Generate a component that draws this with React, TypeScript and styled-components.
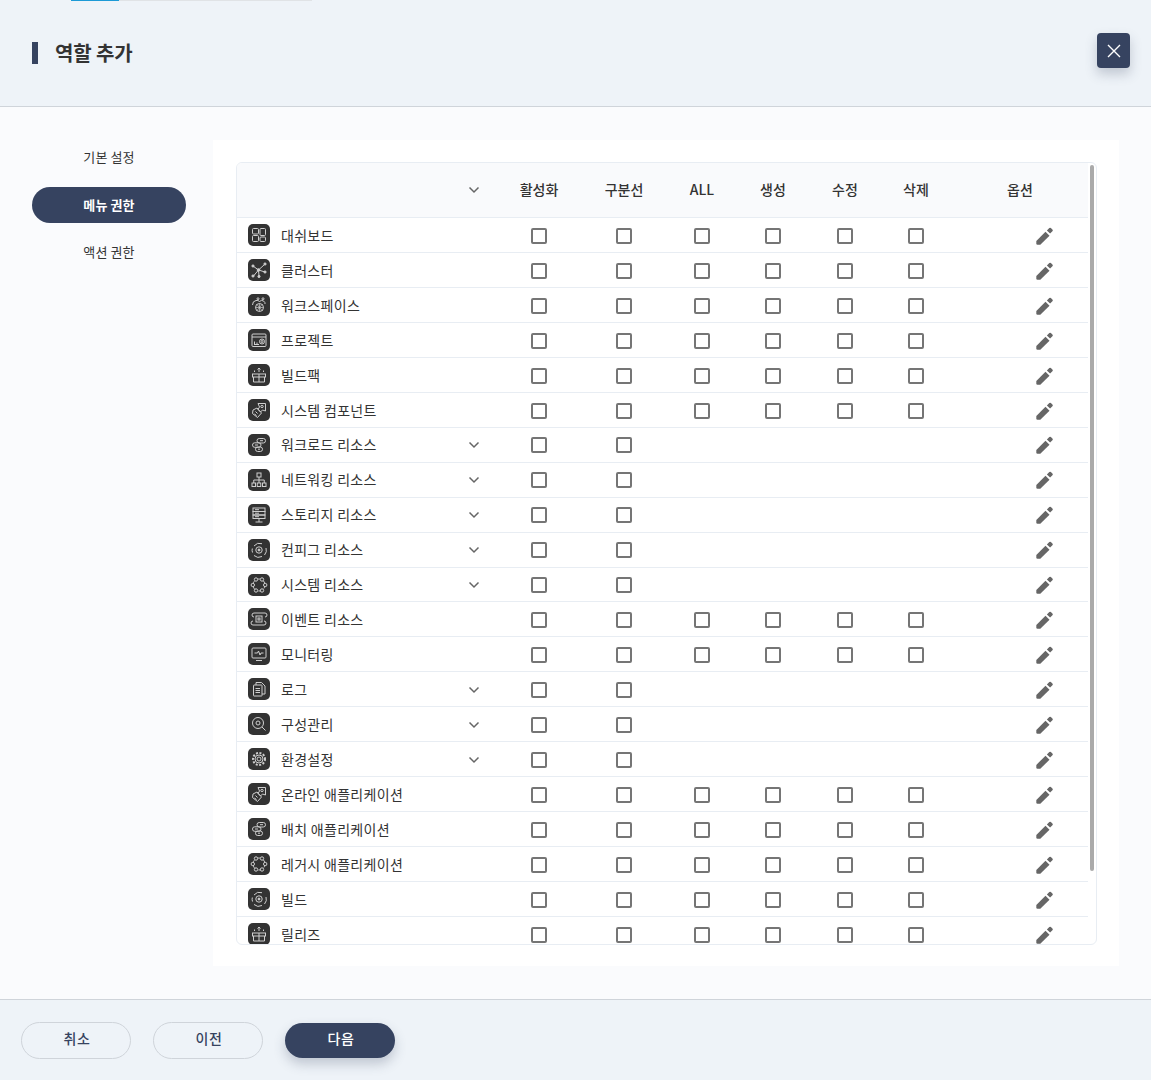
import React from 'react'
import styled, { createGlobalStyle } from 'styled-components'

const GlobalStyle = createGlobalStyle`
  html, body {
    margin: 0;
    padding: 0;
    height: 100%;
    background: #fafbfd;
    font-family: 'Noto Sans CJK KR', 'Noto Sans', sans-serif;
    color: #333;
  }
  * { box-sizing: border-box; }
`

const COLUMNS = '260px 84px 86px 70px 72px 72px 70px 138px'

const Page = styled.div`
  width: 1151px;
  height: 1080px;
  display: flex;
  flex-direction: column;
  overflow: hidden;
`

const Header = styled.header`
  height: 107px;
  flex: none;
  background: #eef3f8;
  border-bottom: 1px solid #cfd4da;
`

const Progress = styled.div`
  width: 241px;
  height: 1px;
  margin-left: 71px;
  background: #e0e3e6;
`

const ProgressFill = styled.div`
  height: 100%;
  background: #1c9ad6;
`

const HeaderRow = styled.div`
  display: flex;
  align-items: flex-start;
  justify-content: space-between;
  padding: 32px 21px 0 32px;
`

const Title = styled.h1`
  margin: 9px 0 0;
  display: flex;
  align-items: center;
  gap: 17px;
  font-size: 20px;
  font-weight: 700;
  line-height: 22px;
  letter-spacing: -0.1px;
  color: #333;

  &::before {
    content: '';
    width: 6px;
    height: 22px;
    background: #364360;
  }
`

const CloseButton = styled.button`
  width: 33px;
  height: 35px;
  padding: 0;
  border: 0;
  border-radius: 4px;
  background: #364360;
  box-shadow: 0 6px 12px rgba(54, 67, 96, 0.25);
  display: flex;
  align-items: center;
  justify-content: center;
`

const Body = styled.main`
  flex: 1;
  min-height: 0;
  display: flex;
  padding: 33px 32px;
  background: #fafbfd;
`

const Side = styled.nav`
  width: 181px;
  flex: none;
  margin-top: -0.25px;
  display: flex;
  flex-direction: column;
  gap: 11.5px;
`

const SideItem = styled.div<{ $active?: boolean }>`
  width: 154px;
  height: 36px;
  padding-bottom: 2px;
  border-radius: 18px;
  display: flex;
  align-items: center;
  justify-content: center;
  font-size: 13px;
  letter-spacing: 0.1px;
  font-weight: ${p => (p.$active ? 700 : 400)};
  color: ${p => (p.$active ? '#fff' : '#333')};
  background: ${p => (p.$active ? '#364360' : 'transparent')};
`

const Panel = styled.section`
  width: 906px;
  height: 826px;
  flex: none;
  padding: 22px 22px 21px 23px;
  background: #fff;
`

const TableBox = styled.div`
  position: relative;
  height: 100%;
  padding-right: 8px;
  border: 1px solid #e8edf3;
  border-radius: 6px;
  overflow: hidden;
`

const ScrollThumb = styled.div`
  position: absolute;
  top: 2px;
  right: 2px;
  width: 4px;
  height: 706px;
  border-radius: 2px;
  background: #aaa;
`

const HeadRow = styled.div`
  display: grid;
  grid-template-columns: ${COLUMNS};
  height: 55px;
  align-items: center;
  background: #f9fafc;
  border-bottom: 1px solid #e8edf3;
`

const HeadCell = styled.div`
  padding-bottom: 2px;
  text-align: center;
  font-size: 14px;
  font-weight: 500;
  color: #333;
`

const Row = styled.div`
  display: grid;
  grid-template-columns: ${COLUMNS};
  height: 34.96px;
  align-items: center;
  border-bottom: 1px solid #e8edf3;
`

const NameCell = styled.div`
  display: flex;
  align-items: center;
  gap: 11px;
  padding-left: 11px;
  padding-right: 17px;
  font-size: 14px;
  letter-spacing: 0.3px;
  color: #333;
`

const HeadChevron = styled.div`
  display: flex;
  justify-content: flex-end;
  padding-right: 17px;
`

const Name = styled.span`
  flex: 1;
  padding-bottom: 0.42px;
  white-space: nowrap;
`

const ChevronIcon = styled.svg`
  display: block;
  flex: none;
  fill: none;
  stroke: #666;
  stroke-width: 1.5;
`

const RowChevron = styled(ChevronIcon)`
  margin-top: 1.56px;
`

const IconTile = styled.span`
  width: 22px;
  height: 22px;
  flex: none;
  border-radius: 5px;
  background: #333;
  display: block;

  svg {
    display: block;
    fill: none;
    stroke: #cfcfcf;
    stroke-width: 1;
  }
`

const Center = styled.div`
  display: flex;
  justify-content: center;
  padding-top: 1.56px;
`

const Check = styled.input.attrs({ type: 'checkbox' })`
  appearance: none;
  width: 16px;
  height: 16px;
  margin: 0;
  border: 2px solid #757575;
  border-radius: 2px;
  background: #fff;
`

const EditCell = styled.div`
  display: flex;
  justify-content: center;
  padding-left: 49px;
  padding-top: 1.56px;
`

const Footer = styled.footer`
  height: 81px;
  flex: none;
  display: flex;
  align-items: center;
  gap: 22px;
  padding: 0 0 0 21px;
  background: #eef3f8;
  border-top: 1px solid #cfd4da;
`

const FooterButton = styled.button<{ $primary?: boolean }>`
  width: 110px;
  height: ${p => (p.$primary ? 35 : 37)}px;
  padding: 0 0 4px 2px;
  border-radius: 19px;
  border: ${p => (p.$primary ? '0' : '1px solid #cfd4da')};
  background: ${p => (p.$primary ? '#364360' : 'transparent')};
  color: ${p => (p.$primary ? '#fff' : '#364360')};
  box-shadow: ${p => (p.$primary ? '0 6px 12px rgba(54, 67, 96, 0.25)' : 'none')};
  font-family: inherit;
  font-size: 14px;
  letter-spacing: 0.5px;
  font-weight: 500;
`

const Close = () => (
  <svg width="14" height="14" viewBox="0 0 14 14" fill="none" stroke="#fff" strokeWidth="1.4">
    <path d="M1 1l12 12M13 1 1 13" />
  </svg>
)

const Pencil = () => (
  <svg width="17" height="18" viewBox="0 0 17 18" fill="#666">
    <path d="M.3 13.900 9.500 4.700l4 4-9.200 9.100H1.500Q.3 17.800.3 16.600z" />
    <path d="M10.900 3.400l2.400-2.300q.8-.8 1.600 0l1.500 1.500q.8.800 0 1.600l-2.300 2.400z" />
  </svg>
)

const glyphs: Record<string, React.ReactNode> = {
  dashboard: (
    <>
      <rect x="4.500" y="4.500" width="6" height="5.500" rx="1" />
      <rect x="4.500" y="11.500" width="6" height="6" rx="1" />
      <rect x="12" y="4.500" width="5.500" height="7" rx="1" />
      <rect x="12" y="13" width="5.500" height="4.500" rx="1" />
    </>
  ),
  cluster: (
    <>
      <path d="M10.500 11 16.500 5.500M10.500 11 5 7M10.500 11 5.500 17M10.500 11 11 17M10.500 11 17 13" />
      <circle cx="10.500" cy="11" r="1.300" fill="#cfcfcf" />
      <circle cx="17" cy="5" r="1.100" fill="#cfcfcf" />
      <circle cx="5" cy="7" r="1.100" fill="#cfcfcf" />
      <circle cx="5" cy="17" r="1.100" fill="#cfcfcf" />
      <circle cx="11" cy="17.500" r="1.100" fill="#cfcfcf" />
      <circle cx="17" cy="13" r="1.100" fill="#cfcfcf" />
    </>
  ),
  workspace: (
    <>
      <circle cx="11.500" cy="13.500" r="4" />
      <path d="M7.500 13.500h8M11.500 9.500v8M9 10.500l5 6M14 10.500l-5 6" strokeWidth="0.7" />
      <path d="M4.500 11q0-4 3.500-4.500 2-.5 3.500 1 2-2 4-.5t1.500 3" />
      <circle cx="10" cy="4.800" r="1" />
      <circle cx="15" cy="4.800" r="1" />
    </>
  ),
  project: (
    <>
      <rect x="4" y="5" width="14" height="12.500" rx="1" />
      <path d="M4 8h14M6.500 15.500v-3M9 15.500v-2M11 15.500H6" />
      <circle cx="14" cy="12.500" r="2.500" />
      <circle cx="14" cy="12.500" r="1" />
    </>
  ),
  pack: (
    <>
      <rect x="4.500" y="10" width="13" height="3" />
      <path d="M5.500 13v5h11v-5M11 10v8M11 8V4M9.500 5.500 11 4l1.500 1.500M6.500 8V6.500M15.500 8V6.500" />
    </>
  ),
  component: (
    <>
      <path d="M10 4.500h7.500V12l-3-1-2 2-2.500-2.500 1.500-2.500z" />
      <path d="M5 11l4-2 4.500 5-4 4.500-5-4z" />
      <circle cx="14" cy="7.500" r="1.200" />
      <path d="M7.500 12.500l2 2M6.500 15l2 1.500" />
    </>
  ),
  workload: (
    <>
      <rect x="9" y="4.500" width="8.500" height="4.500" rx="2.200" />
      <rect x="4.500" y="8.800" width="8.500" height="4.500" rx="2.200" />
      <rect x="7.500" y="13" width="7" height="4.500" rx="2.200" />
      <path d="M12 6.700h3M7 11h3M10 15.200h2" />
    </>
  ),
  network: (
    <>
      <rect x="9" y="4" width="4" height="4" />
      <rect x="4" y="14" width="3.500" height="3.500" />
      <rect x="9.250" y="14" width="3.500" height="3.500" />
      <rect x="14.500" y="14" width="3.500" height="3.500" />
      <path d="M11 8v6M5.750 14v-3h10.500v3" />
    </>
  ),
  storage: (
    <>
      <rect x="5" y="4" width="12" height="3.500" />
      <rect x="5" y="7.500" width="12" height="3.500" />
      <rect x="5" y="11" width="12" height="3.500" />
      <path d="M11 14.500V18M7.500 18h7M7 5.700h4M7 9.200h4M7 12.700h4" />
    </>
  ),
  config: (
    <>
      <path d="M6 7A7 7 0 0 1 14 4.700M18 9a7 7 0 0 1-1.500 7M14 17.500a7 7 0 0 1-8-1M4.500 13.500a7 7 0 0 1-.200-4" />
      <circle cx="11" cy="11" r="3.200" />
      <circle cx="11" cy="11" r="1" fill="#cfcfcf" />
    </>
  ),
  system: (
    <>
      <circle cx="11" cy="11" r="6" strokeDasharray="2.600 3.680" strokeDashoffset="-1" />
      <circle cx="8" cy="5.500" r="1.700" />
      <circle cx="14" cy="5.500" r="1.700" />
      <circle cx="4.800" cy="11" r="1.700" />
      <circle cx="17.200" cy="11" r="1.700" />
      <circle cx="8" cy="16.500" r="1.700" />
      <circle cx="14" cy="16.500" r="1.700" />
    </>
  ),
  event: (
    <>
      <path d="M6 5h11a2 2 0 0 1 0 4M5 17h11a2 2 0 0 0 0-4M6 5a2 2 0 0 0 0 4M5 13a2 2 0 0 0 0 4" />
      <rect x="8" y="8" width="6" height="6" />
      <rect x="10" y="10" width="2" height="2" />
    </>
  ),
  monitor: (
    <>
      <rect x="4" y="5" width="14" height="10" rx="1" />
      <path d="M6.500 10h3l1-2 1.500 4 1-2h2.500M8 17.500h6" />
    </>
  ),
  log: (
    <>
      <path d="M8 7V4.500h5.500L17 8v8h-3" />
      <rect x="5.500" y="7" width="8.500" height="11" rx="0.500" />
      <path d="M7.500 10.500h4.500M7.500 12.500h4.500M7.500 14.500h4.500" />
    </>
  ),
  search: (
    <>
      <circle cx="10" cy="10" r="5.500" />
      <circle cx="10" cy="10" r="2" />
      <path d="M14 14l3.500 3.500" />
    </>
  ),
  settings: (
    <>
      <circle cx="11" cy="11" r="2" />
      <circle cx="11" cy="11" r="4" />
      <circle cx="11" cy="11" r="6" strokeDasharray="2 1.500" strokeWidth="2" />
    </>
  ),
}

const TileIcon = ({ name }: { name: string }) => (
  <IconTile>
    <svg width="22" height="22" viewBox="0 0 22 22">
      {glyphs[name]}
    </svg>
  </IconTile>
)

type Menu = { name: string; icon: string; expand?: boolean; crud?: boolean }

const menus: Menu[] = [
  { name: '대쉬보드', icon: 'dashboard', crud: true },
  { name: '클러스터', icon: 'cluster', crud: true },
  { name: '워크스페이스', icon: 'workspace', crud: true },
  { name: '프로젝트', icon: 'project', crud: true },
  { name: '빌드팩', icon: 'pack', crud: true },
  { name: '시스템 컴포넌트', icon: 'component', crud: true },
  { name: '워크로드 리소스', icon: 'workload', expand: true },
  { name: '네트워킹 리소스', icon: 'network', expand: true },
  { name: '스토리지 리소스', icon: 'storage', expand: true },
  { name: '컨피그 리소스', icon: 'config', expand: true },
  { name: '시스템 리소스', icon: 'system', expand: true },
  { name: '이벤트 리소스', icon: 'event', crud: true },
  { name: '모니터링', icon: 'monitor', crud: true },
  { name: '로그', icon: 'log', expand: true },
  { name: '구성관리', icon: 'search', expand: true },
  { name: '환경설정', icon: 'settings', expand: true },
  { name: '온라인 애플리케이션', icon: 'component', crud: true },
  { name: '배치 애플리케이션', icon: 'workload', crud: true },
  { name: '레거시 애플리케이션', icon: 'system', crud: true },
  { name: '빌드', icon: 'config', crud: true },
  { name: '릴리즈', icon: 'pack', crud: true },
]

const heads = ['활성화', '구분선', 'ALL', '생성', '수정', '삭제']

const App = () => (
  <Page>
    <GlobalStyle />
    <Header>
      <Progress>
        <ProgressFill style={{ width: `${(48 / 241) * 100}%` }} />
      </Progress>
      <HeaderRow>
        <Title>역할 추가</Title>
        <CloseButton aria-label="닫기">
          <Close />
        </CloseButton>
      </HeaderRow>
    </Header>
    <Body>
      <Side>
        <SideItem>기본 설정</SideItem>
        <SideItem $active>메뉴 권한</SideItem>
        <SideItem>액션 권한</SideItem>
      </Side>
      <Panel>
        <TableBox>
          <HeadRow>
            <HeadChevron>
              <ChevronIcon width="12" height="8" viewBox="0 0 12 8">
                <path d="M1.500 1.500 6 6l4.500-4.500" />
              </ChevronIcon>
            </HeadChevron>
            {heads.map(h => (
              <HeadCell key={h}>{h}</HeadCell>
            ))}
            <HeadCell>옵션</HeadCell>
          </HeadRow>
          {menus.map(m => (
            <Row key={m.name}>
              <NameCell>
                <TileIcon name={m.icon} />
                <Name>{m.name}</Name>
                {m.expand && (
                  <RowChevron width="12" height="8" viewBox="0 0 12 8">
                    <path d="M1.500 1.500 6 6l4.500-4.500" />
                  </RowChevron>
                )}
              </NameCell>
              <Center>
                <Check />
              </Center>
              <Center>
                <Check />
              </Center>
              {[0, 1, 2, 3].map(i =>
                m.crud ? (
                  <Center key={i}>
                    <Check />
                  </Center>
                ) : (
                  <div key={i} />
                ),
              )}
              <EditCell>
                <Pencil />
              </EditCell>
            </Row>
          ))}
          <ScrollThumb />
        </TableBox>
      </Panel>
    </Body>
    <Footer>
      <FooterButton>취소</FooterButton>
      <FooterButton>이전</FooterButton>
      <FooterButton $primary>다음</FooterButton>
    </Footer>
  </Page>
)

export default App
